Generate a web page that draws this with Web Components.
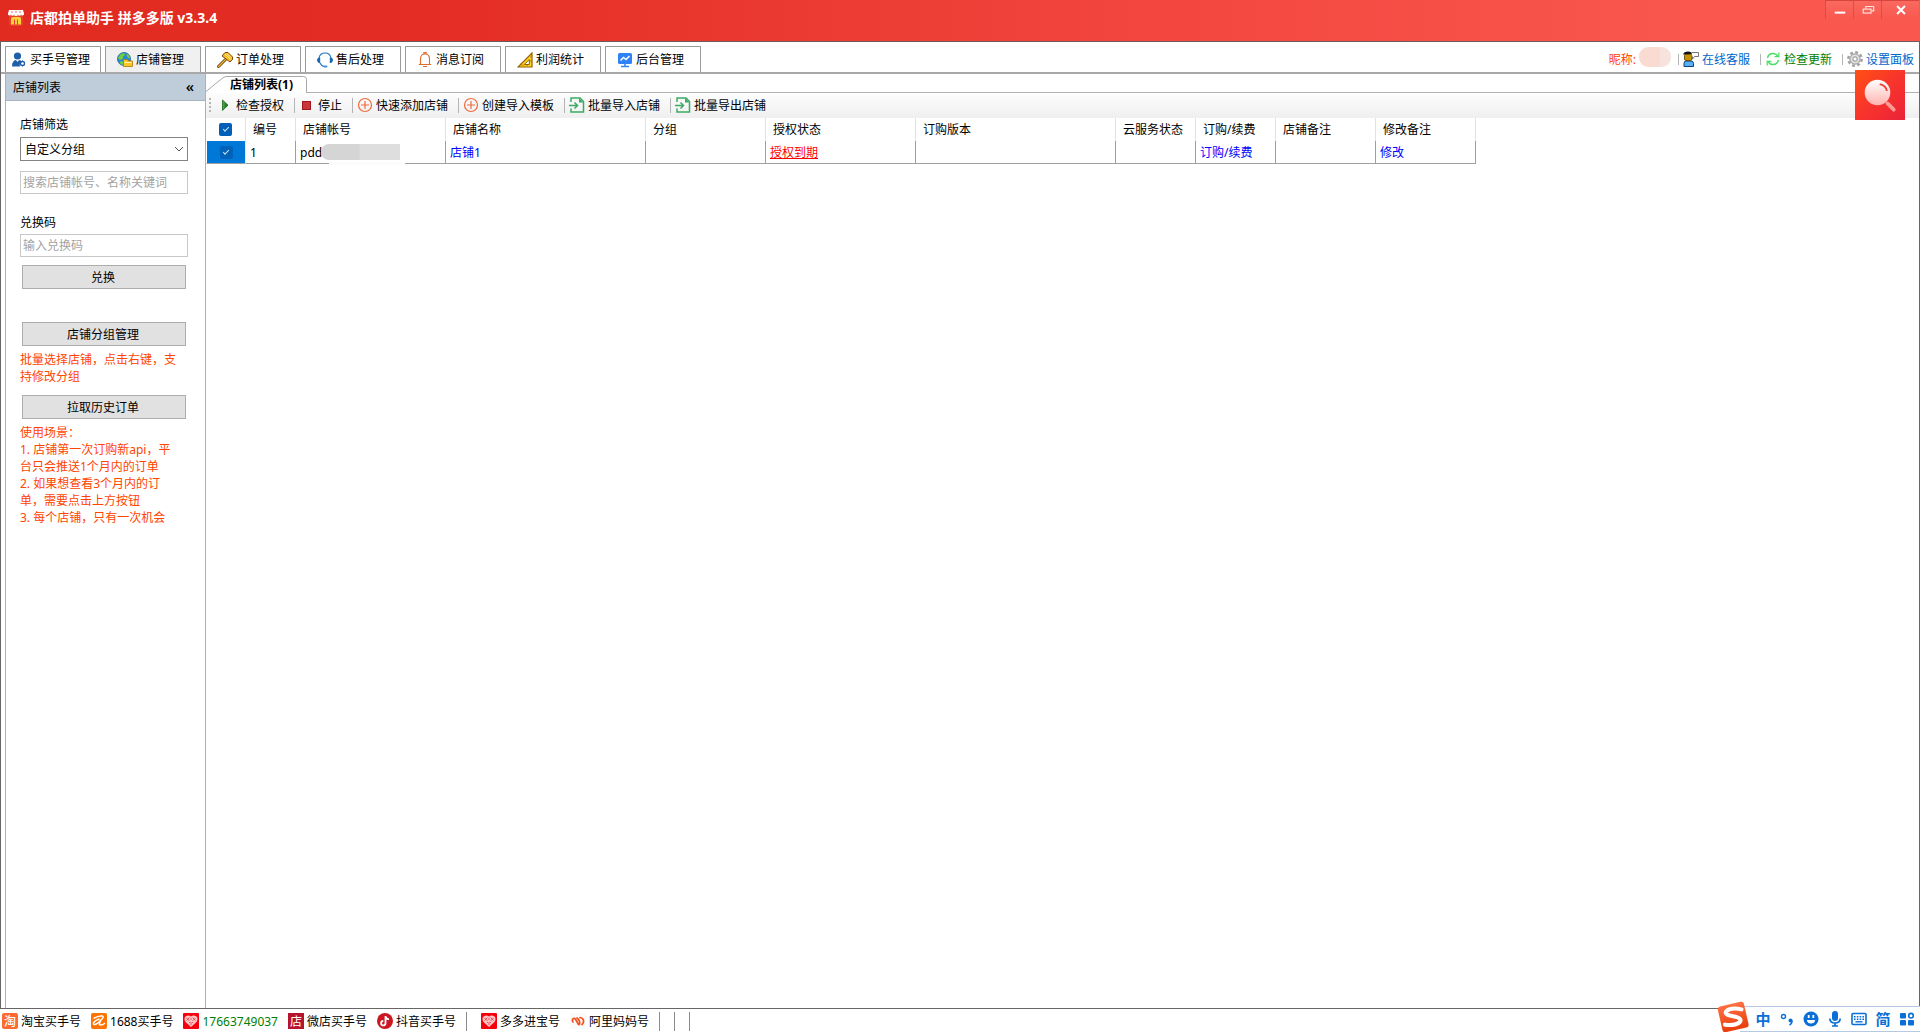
<!DOCTYPE html>
<html lang="zh-CN">
<head>
<meta charset="utf-8">
<title>店都拍单助手 拼多多版 v3.3.4</title>
<style>
  html, body { margin: 0; height: 100%; }
  body { font: 12px/17px "Noto Sans", "Noto Sans CJK SC", sans-serif; color: #000; background: #fff; overflow: hidden; }
</style>
</head>
<body>
<app-window></app-window>
<script>
const ICONS = {
  shop: `<rect x="1" y="4" width="14" height="12" rx="2" fill="#e8402c"/><path d="M1 0h14l1 3.500a1.500 1.500 0 0 1-3 .8 1.500 1.500 0 0 1-3 0 1.500 1.500 0 0 1-4 0 1.500 1.500 0 0 1-3 0 1.500 1.500 0 0 1-3-.8z" fill="#fff"/><path d="M3 2h2M7 2h2M11 2h2" stroke="#e06a5a"/><path d="M3 14.500V8.500q0-1.500 2-1.500h6q2 0 2 1.500v6h-3v-5h-1v5H7v-5H6v5z" fill="#ffcf3a"/>`,
  user: `<circle cx="6.500" cy="4" r="3.600" fill="#1f5fa8"/><path d="M1 14.500Q1 8.500 5 8l1.500 2L8 8q2 0 3 1.500-3 1.500-2 5z" fill="#1f5fa8"/><circle cx="11.500" cy="11.500" r="2" fill="#fff" stroke="#1f5fa8" stroke-width="1.300"/><path d="M11.500 8.500v1M11.500 13.500v1M9 10l.9.500M13.200 12.500l.9.500M9 13l.9-.5M13.200 10.500l.9-.5" stroke="#1f5fa8"/>`,
  globe: `<circle cx="7" cy="7" r="6.500" fill="#2a86d8" stroke="#1b5f9e" stroke-width=".8"/><path d="M2 4q2-3 5-3l1 2-2 1.500v2L3.500 8 1 6.500zM9 1.500q4 1.500 4.200 5L11 6 9.500 3zM4 9l3 1v3q-3 0-4.500-2z" fill="#6fd03c"/><path d="M6.500 9V7.500h4L11.500 9h4v5.500h-9z" fill="#f8c628" stroke="#a97a0a" stroke-width=".8"/><path d="M7 10.500h8" stroke="#fff3a8"/>`,
  gavel: `<path d="M8.500 7.500l-7 7" stroke="#6b4306" stroke-width="3" stroke-linecap="round"/><path d="M8.500 7.500l-7 7" stroke="#e9b33a" stroke-width="1.400" stroke-linecap="round"/><path d="M5 4l3-3.500h3l4.500 4.500v2.500L13 10 5 4z" fill="#f5bd2a" stroke="#7a4a06"/><path d="M8 2l5.500 5.500M10 1.500l4.500 4.500" stroke="#fff0a0" stroke-width=".8"/>`,
  headset: `<path d="M2 6Q3 1 8 1t6 5" fill="none" stroke="#1f74c4" stroke-width="1.100"/><path d="M2 5.500Q0 6 0 8t2 3h1.200V5.500zM14 5.500q2 .5 2 2.500t-2 3h-1.200V5.500z" fill="#1768b3"/><path d="M3 11q1.500 3 4 3.600" fill="none" stroke="#1f74c4" stroke-width="1.200"/><rect x="6.500" y="13.500" width="4" height="2" rx="1" fill="#3f93e0"/>`,
  bell: `<path d="M3.500 12V7q0-5 4.500-5t4.500 5v5M1.800 12.500h12.400" fill="none" stroke="#e06c2c" stroke-width="1.100"/><path d="M7 2V.6h2V2M6 14.500h4" stroke="#e06c2c" stroke-width="1.200" fill="none"/>`,
  ruler: `<path d="M15 1v14H1z" fill="#ffd51f" stroke="#936003" stroke-width="1.200"/><path d="M12.300 7.500v5H7.300z" fill="#fff" stroke="#936003"/><path d="M4 13.500v-2M6 14v-1.500M10 14v-1.500M13 5h1.500M13 9h1.500" stroke="#936003" stroke-width=".8"/>`,
  screen: `<rect x="1" y="1" width="14" height="11" rx="1.500" fill="#2f82f6"/><path d="M3.500 8.500l3-3 2.500 2 3.500-3.500" fill="none" stroke="#fff" stroke-width="1.500"/><path d="M8 12v2M4 14.500h8" stroke="#2f82f6" stroke-width="1.500"/>`,
  play: `<defs><linearGradient id="g"><stop offset="0" stop-color="#5bb05a"/><stop offset="1" stop-color="#0c5a10"/></linearGradient></defs><path d="M5.500 3v10.500L11 8.200z" fill="url(#g)" stroke="#1b6a1d" stroke-width=".8"/>`,
  stop: `<rect x="3.500" y="4.500" width="8" height="8" fill="#c9373b" stroke="#a3181d"/>`,
  plus: `<circle cx="8" cy="8" r="6.500" fill="none" stroke="#f2683c" stroke-width="1.200"/><path d="M8 4v8M4 8h8" stroke="#f2683c" stroke-width="1.200"/>`,
  file: `<path d="M2 5V1h9l3.500 3.500V15H2v-3.500" fill="none" stroke="#3bab63" stroke-width="1.500"/><path d="M10 1v4.500h4.500z" fill="#3bab63"/><path d="M0 8.500h8M5.500 5.500l3 3-3 3" fill="none" stroke="#3bab63" stroke-width="1.500"/>`,
  agent: `<path d="M1 15.500v-3Q1 10 3 10h5q2.500 0 2.500 2.500v3z" fill="#5bb0f5" stroke="#0c3f7d"/><rect x="1.500" y="3" width="7.500" height="6.500" rx="1.500" fill="#c89200" stroke="#5a3c00" stroke-width=".8"/><path d="M0 3.500Q1 .5 5 .5t4 2.500z" fill="#111"/><path d="M8.500 1.500h7v4h-4L9.500 8V5.500" fill="#fff" stroke="#666" stroke-width=".9"/>`,
  refresh: `<path d="M2.500 7Q3.500 2.500 8 2.500q3 0 4.800 2.500M13.500 9q-1 4.500-5.500 4.500-3 0-4.800-2.500" fill="none" stroke="#45de62" stroke-width="1.400"/><path d="M13.800 1.500v4.200H9.600M2.200 14.500v-4.200h4.200" fill="none" stroke="#45de62" stroke-width="1.200"/>`,
  gear: `<circle cx="8" cy="8" r="6.700" fill="none" stroke="#a2a2a2" stroke-width="2.400" stroke-dasharray="2.900 2.360"/><circle cx="8" cy="8" r="5.300" fill="#bdbdbd" stroke="#9c9c9c" stroke-width=".8"/><circle cx="8" cy="8" r="3.600" fill="none" stroke="#e2e2e2" stroke-width="1.400"/><circle cx="8" cy="8" r="2" fill="#fff" stroke="#999" stroke-width=".8"/>`,
  taobao: `<rect width="16" height="16" rx="2" fill="#ff6a30"/><text x="8" y="12.500" text-anchor="middle" font-size="12" font-weight="500" fill="#fff">淘</text>`,
  ali: `<rect width="16" height="16" rx="2" fill="#ff7300"/><path d="M2.500 5.500Q7 2.500 11.500 3q1.500 1-.5 3Q6.500 11 4 11.500q-2 0-1.500-1.500Q4 7 8.500 6M10 7q-2.500 4.500-1 5 2.500.3 5-2" fill="none" stroke="#fff" stroke-width="1.500"/>`,
  pdd: `<rect width="16" height="16" rx="1" fill="#f5000c"/><path d="M8 14L2.500 9Q.5 5.500 2.500 3.500 5.500 1.500 8 3.500q2.500-2 5.500 0 2 2 0 5.500z" fill="#ffc4c6"/><path d="M3.500 5l3 3M6.500 4.500l-3 3M12.500 5l-3 3M9.500 4.500l3 3M8 5v2M8 9v3M6 10l1-1M10 10L9 9" stroke="#e8303a" stroke-width=".8" fill="none"/>`,
  weidian: `<rect width="16" height="16" fill="#b5152f"/><text x="8" y="12.500" text-anchor="middle" font-size="12" fill="#fff">店</text>`,
  douyin: `<circle cx="8" cy="8" r="8" fill="#cc1722"/><path d="M8.500 3v7.200a2.200 2.200 0 1 1-2.200-2.200M8.500 3.500q.8 2.500 3.500 2.800" fill="none" stroke="#fff" stroke-width="1.800"/>`,
  alimama: `<rect width="16" height="16" fill="#fafafa"/><path d="M3 9Q1.500 6.500 3.500 5.500 5 5 6 7l2.500 4.500M7 5q3.500 2.500 2.500 6.500M10 4.500q3 .5 3.500 3t-1.500 4" fill="none" stroke="#f4511e" stroke-width="1.700" stroke-linecap="round"/>`,
  smile: `<circle cx="8" cy="8" r="7.500" fill="#0a70d8"/><path d="M3.800 9h8.400q-.6 3.500-4.200 3.500T3.800 9z" fill="#fff"/><rect x="4.800" y="4" width="1.800" height="3" fill="#fff"/><rect x="9.400" y="4" width="1.800" height="3" fill="#fff"/>`,
  mic: `<rect x="5" y="0" width="6" height="10" rx="3" fill="#0a70d8"/><path d="M2.800 7.500q.2 4.500 5.200 4.500t5.200-4.500M8 12v2.500M5 15h6" fill="none" stroke="#0a70d8" stroke-width="1.700"/>`,
  keys: `<rect x="1" y="2.500" width="14" height="11" rx="1" fill="none" stroke="#0a70d8" stroke-width="1.600"/><path d="M3 5.800h10M3 8.300h10" stroke="#0a70d8" stroke-width="1.500" stroke-dasharray="1.600 1.200"/><path d="M4.500 10.800h7" stroke="#0a70d8" stroke-width="1.400"/>`,
  grid: `<rect x="1" y="2" width="6" height="5.500" rx="1" fill="#0a70d8"/><rect x="1" y="9" width="6" height="5.500" rx="1" fill="#0a70d8"/><rect x="9" y="9" width="6" height="5.500" rx="1" fill="#0a70d8"/><circle cx="12" cy="4.700" r="2.300" fill="none" stroke="#0a70d8" stroke-width="1.600"/>`,
  punct: `<circle cx="4.500" cy="5.500" r="2" fill="none" stroke="#0a70d8" stroke-width="1.400"/><circle cx="11.500" cy="9.500" r="2" fill="#0a70d8"/><path d="M13 9.500q.2 3-2.500 4.500" fill="none" stroke="#0a70d8" stroke-width="1.500"/>`,
  min: `<path d="M2 11h12" stroke="#fff" stroke-width="2.300"/>`,
  restore: `<path d="M5.500 6.500V4h9v5H12" fill="none" stroke="#ffe3e0" stroke-width="1.300"/><rect x="2.500" y="7" width="9" height="4.500" fill="none" stroke="#ffe3e0" stroke-width="1.300"/>`,
  close: `<path d="M3.500 3.500l9 9M12.500 3.500l-9 9" stroke="#fff" stroke-width="2.300"/>`,
  chevron: `<path d="M4 6l4 4 4-4" fill="none" stroke="#555"/>`,
  sogou: `<defs><linearGradient id="s" x2="0" y2="1"><stop offset="0" stop-color="#ff6f43"/><stop offset="1" stop-color="#e93d0c"/></linearGradient></defs><rect x="1.800" y="1.800" width="12.600" height="12.400" rx="1.400" fill="url(#s)" transform="rotate(-13 8 8)"/><path d="M12 4.400Q7 3.300 4.800 5.300q-1 1.700 3.200 2.300 4.600.8 3.200 2.800-2.200 1.900-7 1.200" fill="none" stroke="#fff" stroke-width="1.900" stroke-linecap="round"/>`,
  search: `<defs><linearGradient id="m" x2="0" y2="1"><stop offset="0" stop-color="#fff"/><stop offset="1" stop-color="#ffb3ae"/></linearGradient></defs><path d="M10.400 10.700l2 2" stroke="#ff9a94" stroke-width="1.200" stroke-linecap="round"/><circle cx="7.200" cy="7.200" r="4.100" fill="url(#m)"/><path d="M7.900 4.500q2 .4 2.300 2.200" fill="none" stroke="#f23a30" stroke-width=".6"/>`
};

function define(name, html, setup) {
  const tpl = document.createElement('template');
  tpl.innerHTML = html;
  customElements.define(name, class extends HTMLElement {
    constructor() { super(); this.attachShadow({ mode: 'open' }).append(tpl.content.cloneNode(true)); }
    connectedCallback() { if (setup) setup(this, this.shadowRoot); }
  });
}

/* Icon: <ui-icon name="..."> */
define('ui-icon', `<style>:host{display:block;flex:none;width:var(--size,16px);height:var(--size,16px)}svg{display:block;width:100%;height:100%}</style><svg viewBox="0 0 16 16" aria-hidden="true"></svg>`,
  (el, root) => { root.querySelector('svg').innerHTML = ICONS[el.getAttribute('name')]; });

/* Thin vertical separator */
define('ui-sep', `<style>:host{display:block;flex:none;width:1px;height:var(--sep-height,15px);background:var(--sep,#b4b4b4)}</style>`);

define('title-bar', `<style>
  :host{display:flex;align-items:flex-start;justify-content:space-between;height:41px;border-bottom:1px solid #6b5b5b;background:linear-gradient(90deg,#e12a20 0%,#e32c23 20%,#f2463e 60%,#fa584e 90%);color:#fff}
  h1{display:flex;align-items:center;gap:6px;margin:0;padding:8px;font-size:14px;line-height:20px}
  .win{display:flex;padding-right:1px}
  button{display:grid;place-items:center;width:28px;height:19px;padding:0;border:0;border-left:1px solid #e9483f;border-top:1px solid #d9443c;background:linear-gradient(#f9695f,#fa584e)}
  button:last-child{width:38px}
  .win ui-icon{--size:14px}
</style><h1><ui-icon name="shop"></ui-icon><slot></slot></h1>
<div class="win"><button aria-label="最小化"><ui-icon name="min"></ui-icon></button><button aria-label="还原"><ui-icon name="restore"></ui-icon></button><button aria-label="关闭"><ui-icon name="close"></ui-icon></button></div>`);

define('nav-tab', `<style>
  :host{display:block;width:96px;height:26px}
  button{display:flex;align-items:center;justify-content:center;gap:3px;box-sizing:border-box;width:100%;height:100%;padding:0 5px 0 0;border:1px solid #9a9a9a;border-bottom:0;background:#fff;font:inherit;color:#000;white-space:nowrap}
  :host([active]) button{background:#f0f0f0}
</style><button role="tab"></button>`,
  (el, root) => { root.querySelector('button').innerHTML = `<ui-icon name="${el.getAttribute('icon')}"></ui-icon><slot></slot>`; });

define('top-link', `<style>
  :host{display:flex}
  a{display:flex;align-items:center;gap:3px;color:inherit;text-decoration:none;white-space:nowrap}
</style><a href="#"></a>`,
  (el, root) => { root.querySelector('a').innerHTML = `<ui-icon name="${el.getAttribute('icon')}"></ui-icon><slot></slot>`; });

define('top-nav', `<style>
  :host{display:flex;justify-content:space-between;align-items:flex-end;padding:4px 5px 0 4px;border-bottom:2px solid #a8a8a8}
  .tabs{display:flex;gap:4px}
  .links{display:flex;align-items:center;gap:4px;height:26px;--sep-height:11px}
  .group{display:flex;align-items:center;gap:10px}
  .name{color:#ff4500}
  .mask{width:32px;height:20px;margin:-4px 3px 0 -1px;border-radius:9px;background:linear-gradient(90deg,#f9dbd2 65%,#f7e3de 66%)}
  .blue{color:#06c}.green{color:#008000}
</style>
<div class="tabs" role="tablist">
  <nav-tab icon="user">买手号管理</nav-tab><nav-tab icon="globe" active>店铺管理</nav-tab><nav-tab icon="gavel">订单处理</nav-tab><nav-tab icon="headset">售后处理</nav-tab><nav-tab icon="bell">消息订阅</nav-tab><nav-tab icon="ruler">利润统计</nav-tab><nav-tab icon="screen">后台管理</nav-tab>
</div>
<div class="links">
  <span class="name">昵称:</span><span class="mask"></span>
  <ui-sep></ui-sep><div class="group"><top-link class="blue" icon="agent">在线客服</top-link><ui-sep></ui-sep></div>
  <div class="group"><top-link class="green" icon="refresh">检查更新</top-link><ui-sep></ui-sep></div>
  <top-link class="blue" icon="gear">设置面板</top-link>
</div>`);

define('side-panel', `<style>
  :host{display:flex;flex-direction:column;flex:none;width:199px;border:solid #b0b0b0;border-width:0 1px}
  header{display:flex;align-items:center;justify-content:space-between;height:26px;padding:0 11px 0 7px;background:#bfcddb;border-bottom:1px solid #aab4be}
  header button{padding:0 0 2px;border:0;background:none;color:#000;font:600 15px/16px "Open Sans",sans-serif}
  form{display:flex;flex-direction:column;padding:15px 17px 0 14px}
  label{display:block}
  .field{position:relative;margin:4px 0 10px}
  .field ui-icon{position:absolute;right:1px;top:4px;pointer-events:none}
  select,input,form button{box-sizing:border-box;width:100%;font:inherit;border-radius:0;display:block}
  select{appearance:none;height:24px;padding:0 4px;border:1px solid #838383;background:#fff;color:#000}
  input{height:23px;padding:0 2px;border:1px solid #c8c8c8;outline:0}
  input::placeholder{color:#a3a3a3;opacity:1}
  .code{margin:20px 0 3px}
  form button{width:auto;height:24px;margin:0 2px;padding:0 2px 0 0;border:1px solid #adadad;background:#e1e1e1;color:#000}
  form .redeem{margin:8px 2px 33px}
  p{margin:5px 8px 10px 0;color:#ff4500}
  p:last-child{white-space:pre-line}
</style>
<header><span>店铺列表</span><button aria-label="收起">«</button></header>
<form>
  <label for="group">店铺筛选</label>
  <div class="field"><select id="group"><option>自定义分组</option></select><ui-icon name="chevron"></ui-icon></div>
  <input type="text" aria-label="搜索店铺" placeholder="搜索店铺帐号、名称关键词">
  <label class="code" for="code">兑换码</label>
  <input type="text" id="code" placeholder="输入兑换码">
  <button type="button" class="redeem">兑换</button>
  <button type="button">店铺分组管理</button>
  <p>批量选择店铺，点击右键，支持修改分组</p>
  <button type="button">拉取历史订单</button>
  <p>使用场景：
1. 店铺第一次订购新api，平台只会推送1个月内的订单
2. 如果想查看3个月内的订单，需要点击上方按钮
3. 每个店铺，只有一次机会</p>
</form>`);

define('page-tabs', `<style>
  :host{display:flex;height:18px;border-bottom:1px solid #b0b0b0}
  button{position:relative;width:101px;height:19px;padding:2px 0 0 24px;border:0;background:none;color:#000;font:inherit;font-weight:bold;text-align:left;white-space:nowrap}
  svg{position:absolute;left:0;top:0}
  span{position:relative}
</style><button role="tab"><svg width="101" height="19" viewBox="0 0 101 19"><path d="M0 19V17.500L16 4.500Q18 2.500 21 2.500H97.500Q100.500 2.500 100.500 5.500V19z" fill="#fff"/><path d="M0 17.500L16 4.500Q18 2.500 21 2.500H97.500Q100.500 2.500 100.500 5.500V19" fill="none" stroke="#a8a8a8"/></svg><span><slot></slot></span></button>`);

define('tool-button', `<style>
  :host{display:flex}
  button{display:flex;align-items:center;gap:3px;padding:0;border:0;background:none;font:inherit;color:#000;white-space:nowrap}
</style><button></button>`,
  (el, root) => { root.querySelector('button').innerHTML = `<ui-icon name="${el.getAttribute('icon')}"></ui-icon><slot></slot>`; });

define('tool-bar', `<style>
  :host{display:flex;align-items:center;box-sizing:border-box;height:25px;padding:0 0 1px 3px;background:linear-gradient(#fdfdfd,#efefef)}
  i{width:2px;height:14px;margin-right:6px;background:repeating-linear-gradient(#b5b5b5 0 2px,transparent 2px 4px)}
  ui-sep{margin:0 4px 0 10px}
</style><i></i>
<tool-button icon="play">检查授权</tool-button><ui-sep></ui-sep>
<tool-button icon="stop">停止</tool-button><ui-sep></ui-sep>
<tool-button icon="plus">快速添加店铺</tool-button><ui-sep></ui-sep>
<tool-button icon="plus">创建导入模板</tool-button><ui-sep></ui-sep>
<tool-button icon="file">批量导入店铺</tool-button><ui-sep></ui-sep>
<tool-button icon="file">批量导出店铺</tool-button>`);

define('shop-table', `<style>
  :host{display:block}
  table{table-layout:fixed;width:1270px;border-collapse:separate;border-spacing:0}
  th,td{box-sizing:border-box;height:23px;padding:0 0 1px 7px;border-right:1px solid #e2e2e2;text-align:left;font-weight:normal;white-space:nowrap;overflow:hidden}
  td{padding:0 0 0 4px;border-right-color:#a0a0a0;border-bottom:1px solid #a0a0a0}
  th:first-child,td:first-child{padding:0}
  td:first-child{background:#0078d7 padding-box;border-left:1px solid #fff;border-right-color:#e8e8e8}
  input{appearance:none;display:grid;place-items:center;width:13px;height:13px;margin:0 auto;border-radius:2px;background:#005fb8}
  td input{background:#0063b9}
  input::before{content:"";width:5px;height:2px;margin-top:-2px;border:solid #cfe4f7;border-width:0 0 1px 1px;transform:rotate(-45deg)}
  a{color:#00f;text-decoration:none}
  a.due{color:#f00;text-decoration:underline}
  .acct{position:relative;overflow:visible}
  .acct::before{content:"";position:absolute;left:33px;right:40px;bottom:-2px;height:3px;background:#fcfcfc}
  .acct::after{content:"";position:absolute;left:25px;top:3px;width:79px;height:16px;border-radius:8px 0 0 8px;background:linear-gradient(90deg,#d5d5d5 0 48%,#dedede 50%)}
</style>
<table>
  <colgroup><col style="width:40px"><col style="width:50px"><col style="width:150px"><col style="width:200px"><col style="width:120px"><col style="width:150px"><col style="width:200px"><col style="width:80px"><col style="width:80px"><col style="width:100px"><col style="width:100px"></colgroup>
  <thead><tr><th><input type="checkbox" checked aria-label="全选"></th><th>编号</th><th>店铺帐号</th><th>店铺名称</th><th>分组</th><th>授权状态</th><th>订购版本</th><th>云服务状态</th><th>订购/续费</th><th>店铺备注</th><th>修改备注</th></tr></thead>
  <tbody><tr><td><input type="checkbox" checked aria-label="选择店铺1"></td><td>1</td><td class="acct">pdd</td><td><a href="#">店铺1</a></td><td></td><td><a href="#" class="due">授权到期</a></td><td></td><td></td><td><a href="#">订购/续费</a></td><td></td><td><a href="#">修改</a></td></tr></tbody>
</table>`);

define('status-bar', `<style>
  :host{display:flex;align-items:center;gap:10px;box-sizing:border-box;height:23px;padding:1px 2px 0;--sep:#8c8c8c;--sep-height:19px}
  .pair{display:flex;gap:14px}
  .green{color:#008000}
</style>
<top-link icon="taobao">淘宝买手号</top-link><top-link icon="ali">1688买手号</top-link><top-link icon="pdd" class="green">17663749037</top-link><top-link icon="weidian">微店买手号</top-link><top-link icon="douyin">抖音买手号</top-link>
<div class="pair"><ui-sep></ui-sep><top-link icon="pdd">多多进宝号</top-link></div><top-link icon="alimama">阿里妈妈号</top-link>
<div class="pair"><ui-sep></ui-sep><ui-sep></ui-sep><ui-sep></ui-sep></div>`);

/* Floating input-method bar */
define('ime-bar', `<style>
  :host{position:absolute;right:0;bottom:0;display:flex;align-items:flex-end}
  .logo{--size:34px;position:relative;margin:0 -10px -2px 0}
  .bar{display:flex;gap:8px;align-items:center;box-sizing:border-box;height:26px;padding:0 5px 0 15px;background:#fff;border:solid #b5c9e2;border-width:1px 0}
  .bar span{width:16px;text-align:center;color:#0a70d8;font-size:15px;font-weight:bold}
</style><ui-icon class="logo" name="sogou"></ui-icon>
<div class="bar"><span>中</span><ui-icon name="punct"></ui-icon><ui-icon name="smile"></ui-icon><ui-icon name="mic"></ui-icon><ui-icon name="keys"></ui-icon><span>简</span><ui-icon name="grid"></ui-icon></div>`);

/* Floating search tile */
define('search-tile', `<style>
  :host{position:absolute;right:15px;top:70px}
  button{display:block;width:50px;height:50px;padding:0;border:0;background:linear-gradient(135deg,#ff5014,#f8342c 50%,#ea2238)}
  ui-icon{--size:50px}
</style><button aria-label="搜索"><ui-icon name="search"></ui-icon></button>`);

define('app-window', `<style>
  :host{position:relative;display:flex;flex-direction:column;height:100vh}
  main{flex:1;display:flex;flex-direction:column;min-height:0;border:solid #666;border-width:0 1px 1px}
  .body{flex:1;display:flex;min-height:0;padding-left:4px}
  section{flex:1;min-width:0}
</style>
<title-bar>店都拍单助手 拼多多版 v3.3.4</title-bar>
<main><top-nav></top-nav>
  <div class="body"><side-panel></side-panel>
    <section><page-tabs>店铺列表(1)</page-tabs><tool-bar></tool-bar><shop-table></shop-table></section>
  </div>
</main>
<status-bar></status-bar><search-tile></search-tile><ime-bar></ime-bar>`);
</script>
</body>
</html>
